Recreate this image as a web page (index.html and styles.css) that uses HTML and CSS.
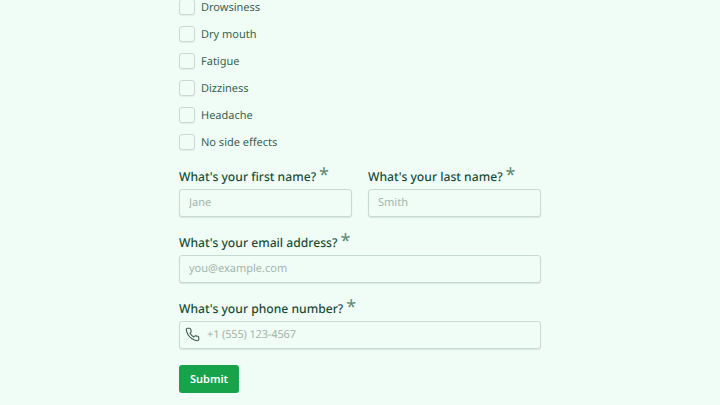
FILE: index.html
```html
<!DOCTYPE html>
<html lang="en">
<head>
  <meta charset="UTF-8">
  <meta name="viewport" content="width=device-width, initial-scale=1.0">
  <title>Side effects survey</title>
  <link rel="stylesheet" href="styles.css">
</head>
<body>
  <form class="form">
    <div class="checks">
      <label class="check"><input type="checkbox"><span>Drowsiness</span></label>
      <label class="check"><input type="checkbox"><span>Dry mouth</span></label>
      <label class="check"><input type="checkbox"><span>Fatigue</span></label>
      <label class="check"><input type="checkbox"><span>Dizziness</span></label>
      <label class="check"><input type="checkbox"><span>Headache</span></label>
      <label class="check"><input type="checkbox"><span>No side effects</span></label>
    </div>

    <div class="name-row">
      <div class="field">
        <label class="label">What's your first name?<span class="req">*</span></label>
        <input class="input" type="text" placeholder="Jane">
      </div>
      <div class="field">
        <label class="label">What's your last name?<span class="req">*</span></label>
        <input class="input" type="text" placeholder="Smith">
      </div>
    </div>

    <div class="field">
      <label class="label">What's your email address?<span class="req">*</span></label>
      <input class="input" type="text" placeholder="you@example.com">
    </div>

    <div class="field">
      <label class="label">What's your phone number?<span class="req">*</span></label>
      <div class="phone">
        <svg class="phone-icon" viewBox="0 0 24 24" fill="none" stroke="currentColor" stroke-width="1.75" stroke-linecap="round" stroke-linejoin="round"><path d="M22 16.92v3a2 2 0 0 1-2.18 2 19.79 19.79 0 0 1-8.63-3.07 19.5 19.5 0 0 1-6-6 19.79 19.79 0 0 1-3.07-8.67A2 2 0 0 1 4.11 2h3a2 2 0 0 1 2 1.72c.13.96.36 1.9.7 2.81a2 2 0 0 1-.45 2.11L8.09 9.91a16 16 0 0 0 6 6l1.27-1.27a2 2 0 0 1 2.11-.45c.91.34 1.85.57 2.81.7A2 2 0 0 1 22 16.92z"/></svg>
        <input class="input phone-input" type="text" placeholder="+1 (555) 123-4567">
      </div>
    </div>

    <button class="submit" type="button">Submit</button>
  </form>
</body>
</html>
```

FILE: styles.css
```css
* {
  box-sizing: border-box;
}

html, body {
  height: 100%;
  overflow: hidden;
}

body {
  margin: 0;
  background-color: #f0fdf6;
  color: #1b4d39;
  font-family: "Noto Sans", sans-serif;
  text-rendering: geometricPrecision;
}

.form {
  width: 362px;
  margin: -2px auto 0;
  display: flex;
  flex-direction: column;
  gap: 16px;
}

.checks {
  display: flex;
  flex-direction: column;
  gap: 9px;
}

.check {
  height: 18px;
  display: flex;
  align-items: center;
  gap: 6px;
  font-size: 11px;
  color: #3a5f50;
}

.check input {
  appearance: none;
  width: 16px;
  height: 16px;
  margin: 0;
  background-color: #f0fdf6;
  border: 1px solid #c8dbd0;
  border-radius: 3px;
  box-shadow: 0 1px 1px rgba(20, 67, 47, 0.08);
}

.name-row {
  display: grid;
  grid-template-columns: 173px 173px;
  gap: 16px;
}

.field {
  display: flex;
  flex-direction: column;
}

.label {
  height: 22px;
  font-size: 12.15px;
  font-weight: 500;
  line-height: 20px;
  white-space: nowrap;
}

.req {
  margin-left: 3px;
  font-size: 18px;
  line-height: 14px;
  font-weight: 400;
  color: #5f8a76;
}

.input {
  width: 100%;
  height: 28px;
  padding: 0 9px 1px;
  background-color: #f0fdf6;
  border: 1px solid #c8dbd0;
  border-radius: 3px;
  box-shadow: 0 1px 1px rgba(20, 67, 47, 0.12);
  font-family: inherit;
  font-size: 11px;
  text-rendering: geometricPrecision;
  color: #1b4d39;
}

.input::placeholder {
  color: #a3b5ac;
}

.phone {
  position: relative;
}

.phone-icon {
  position: absolute;
  left: 6px;
  top: 6px;
  width: 15px;
  height: 15px;
  color: #3a5f50;
}

.phone-input {
  padding-left: 27px;
  letter-spacing: -0.15px;
}

.submit {
  width: 60px;
  height: 28px;
  padding: 0;
  background-color: #16a34a;
  border: none;
  border-radius: 3px;
  font-family: inherit;
  font-size: 11px;
  font-weight: 600;
  text-rendering: geometricPrecision;
  color: #ffffff;
}
```
